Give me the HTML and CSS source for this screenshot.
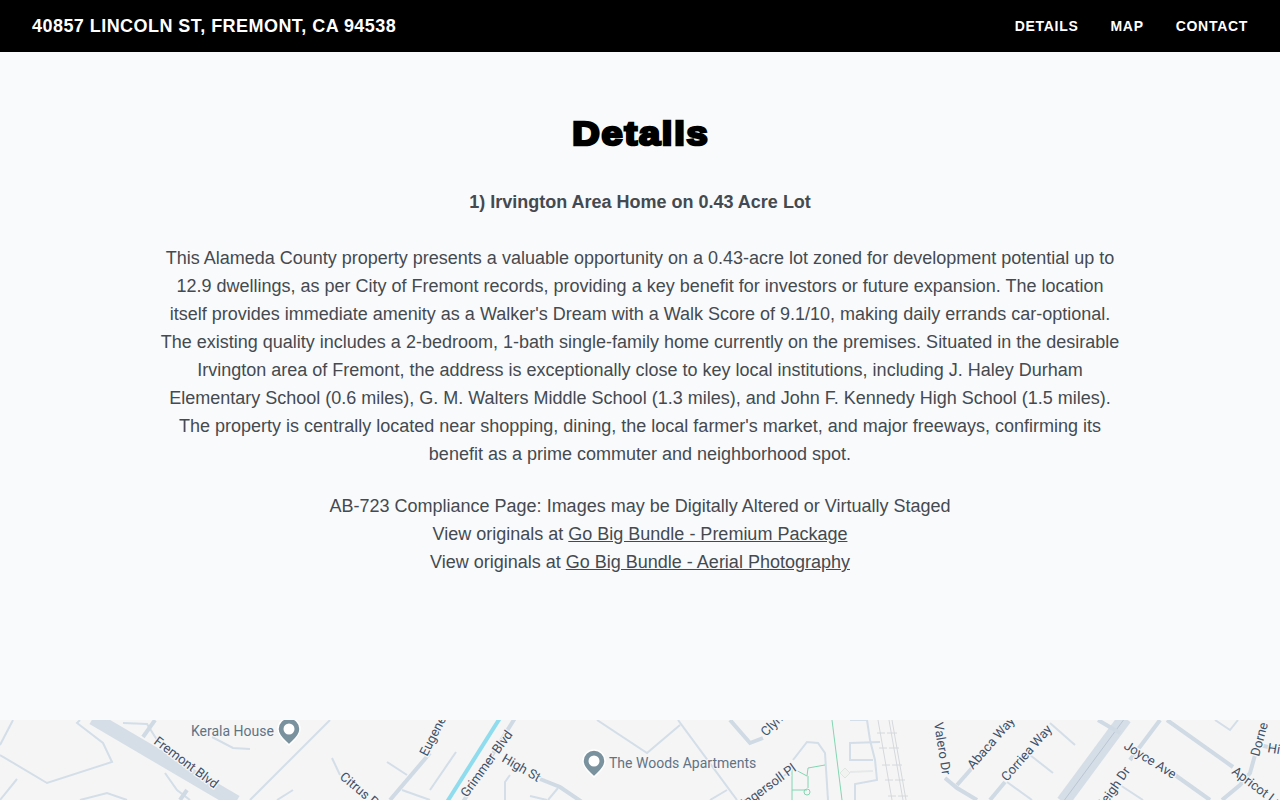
FILE: index.html
```html
<!DOCTYPE html>
<html lang="en">
<head>
    <meta charset="UTF-8">
    <title>40857 Lincoln St, Fremont, CA 94538</title>
    <link rel="stylesheet" href="styles.css">
</head>
<body>
    <header class="topbar">
        <div class="site-title">40857 Lincoln St, Fremont, CA 94538</div>
        <nav class="nav">
            <a href="#details">Details</a>
            <a href="#map">Map</a>
            <a href="#contact">Contact</a>
        </nav>
    </header>

    <section class="details" id="details">
        <h1>Details</h1>
        <p class="lead">1) Irvington Area Home on 0.43 Acre Lot</p>
        <p class="body-text">This Alameda County property presents a valuable opportunity on a 0.43-acre lot zoned for development potential up to 12.9 dwellings, as per City of Fremont records, providing a key benefit for investors or future expansion. The location itself provides immediate amenity as a Walker's Dream with a Walk Score of 9.1/10, making daily errands car-optional. The existing quality includes a 2-bedroom, 1-bath single-family home currently on the premises. Situated in the desirable Irvington area of Fremont, the address is exceptionally close to key local institutions, including J. Haley Durham Elementary School (0.6 miles), G. M. Walters Middle School (1.3 miles), and John F. Kennedy High School (1.5 miles). The property is centrally located near shopping, dining, the local farmer's market, and major freeways, confirming its benefit as a prime commuter and neighborhood spot.</p>
        <p class="compliance">
            AB-723 Compliance Page: Images may be Digitally Altered or Virtually Staged<br>
            View originals at <a href="#">Go Big Bundle - Premium Package</a><br>
            View originals at <a href="#">Go Big Bundle - Aerial Photography</a>
        </p>
    </section>

    <section class="map" id="map">
        <svg class="map-svg" width="1280" height="80" viewBox="0 720 1280 80">
            <!-- wide roads -->
            <g class="road-wide">
                <path d="M93 718L236 802"/>
                <path d="M1125 718L1063 802"/>
            </g>
            <path class="road-centre" d="M1125 718L1063 802"/>

            <!-- streets -->
            <g class="road">
                <path d="M13 720L0 745"/>
                <path d="M0 755L47 783L112 762L103 743L77 723L80 720"/>
                <path d="M17 779L0 800"/>
                <path d="M80 800L107 793L127 800"/>
                <path d="M123 723L147 724L157 740"/>
                <path d="M212 737L233 748L250 749"/>
                <path d="M330 720L250 800"/>
                <path d="M293 790L277 800"/>
                <path d="M332 758L340 775"/>
                <path d="M387 762L407 775"/>
                <path d="M402 790L430 800"/>
                <path d="M165 773L177 790L190 800"/>
                <path d="M597 720L647 753L680 725"/>
                <path d="M678 720L737 800"/>
                <path d="M727 790L710 800"/>
                <path d="M505 800L505 782L510 775"/>
                <path d="M558 788L548 800"/>
                <path d="M530 796L547 800"/>
                <path d="M793 760L807 742L818 743L825 753L828 800"/>
                <path d="M747 800L788 773"/>
                <path d="M850 720L867 720L870 740L875 760L877 780L855 784L855 800"/>
                <path d="M880 742L850 743L850 760L873 760"/>
                <path d="M1050 723L1075 745"/>
                <path d="M1030 755L1053 773"/>
                <path d="M1007 782L1032 800"/>
                <path d="M1215 720L1230 730L1238 720"/>
                <path d="M1120 785L1143 800"/>
                <path d="M456 752L430 790"/>
            </g>
            <g class="road-thick">
                <path d="M155 720L143 737"/>
                <path d="M187 790L180 800"/>
                <path d="M430 753L390 800"/>
                <path d="M515 718L463 802"/>
                <path d="M540 779L560 787L582 802"/>
                <path d="M730 720L750 743L763 738"/>
                <path d="M945 778L957 788L977 800"/>
                <path d="M957 785L972 768"/>
                <path d="M990 800L1005 782"/>
                <path d="M1098 720L1120 733"/>
                <path d="M1160 720L1130 760"/>
                <path d="M1175 775L1210 800"/>
                <path d="M1167 720L1233 767"/>
                <path d="M1255 755L1250 773L1240 785L1222 800"/>
                <path d="M1260 745L1280 750"/>
            </g>
            <path class="transit" d="M500 718L447 802"/>

            <!-- rail -->
            <g class="rail">
                <path d="M878 720L892 800"/>
                <path d="M889 720L903 800"/>
                <path d="M892 720L906 800"/>
                <path d="M877 733H885M887 733H897"/>
                <path d="M879 748H887M889 748H899"/>
                <path d="M882 765H890M892 765H902"/>
                <path d="M885 780H893M895 780H905"/>
                <path d="M888 796H896M898 796H908"/>
            </g>

            <!-- park paths -->
            <g class="park">
                <path d="M832 720L842 800"/>
                <path d="M792 768L807 776L808 768L825 765"/>
                <path d="M792 768L792 800"/>
                <path d="M792 790L807 790"/>
                <path d="M808 776V788"/>
                <circle cx="807" cy="792" r="3"/>
            </g>
            <path class="pale-path" d="M850 772L873 771"/>
            <path class="pale-mark" d="M845 768L850 773L845 778L840 773Z"/>

            <!-- street names -->
            <g class="street-name">
                <text transform="translate(153 743) rotate(37)">Fremont Blvd</text>
                <text transform="translate(339 778) rotate(40)">Citrus P</text>
                <text transform="translate(427 757) rotate(-63)">Eugene</text>
                <text transform="translate(467 798) rotate(-54)">Grimmer Blvd</text>
                <text transform="translate(501 761) rotate(30)">High St</text>
                <text transform="translate(766 737) rotate(-45)">Clyn</text>
                <text transform="translate(745 808) rotate(-36)">Ingersoll Pl</text>
                <text transform="translate(934 723) rotate(81)">Valero Dr</text>
                <text transform="translate(973 770) rotate(-49)">Abaca Way</text>
                <text transform="translate(1007 782) rotate(-49)">Corriea Way</text>
                <text transform="translate(1123 748) rotate(32)">Joyce Ave</text>
                <text transform="translate(1097 819) rotate(-55)">Raleigh Dr</text>
                <text transform="translate(1259 757) rotate(-75)">Dorne</text>
                <text transform="translate(1267 752) rotate(10)">Hi</text>
                <text transform="translate(1231 773) rotate(37)">Apricot Ln</text>
            </g>

            <!-- places -->
            <g class="place-name">
                <text x="191" y="736">Kerala House</text>
                <text x="609" y="768">The Woods Apartments</text>
            </g>
            <g class="pin" transform="translate(289 729)">
                <path class="pin-body" d="M0 16C-3 12 -11 8 -11 0A11 11 0 0 1 11 0C11 8 3 12 0 16Z"/>
                <circle class="pin-dot" r="5.5"/>
            </g>
            <g class="pin" transform="translate(594 761)">
                <path class="pin-body" d="M0 16C-3 12 -11 8 -11 0A11 11 0 0 1 11 0C11 8 3 12 0 16Z"/>
                <circle class="pin-dot" r="5.5"/>
            </g>
        </svg>
    </section>
</body>
</html>
```

FILE: styles.css
```css
html, body {
    margin: 0;
    padding: 0;
}
body {
    font-family: "Liberation Sans", Arial, sans-serif;
    background-color: #f9fafc;
    color: #444a50;
    overflow: hidden;
}
.topbar {
    display: flex;
    justify-content: space-between;
    align-items: center;
    height: 52px;
    padding: 0 32px;
    background-color: #000;
    color: #fff;
}
.site-title {
    font-size: 18px;
    font-weight: bold;
    letter-spacing: 0.45px;
    text-transform: uppercase;
}
.nav {
    display: flex;
    gap: 32px;
}
.nav a {
    color: #fff;
    font-size: 14px;
    font-weight: bold;
    letter-spacing: 0.7px;
    text-decoration: none;
    text-transform: uppercase;
}
.details {
    box-sizing: border-box;
    height: 668px;
    padding-top: 61px;
    text-align: center;
    font-size: 18px;
    line-height: 28px;
}
.details h1 {
    width: 200px;
    margin: 0 auto 33px;
    color: #000;
    font-size: 33px;
    font-weight: bold;
    line-height: 42px;
    letter-spacing: 1.6px;
    text-indent: 1.6px;
    -webkit-text-stroke: 2.6px #000;
    transform: scaleX(1.15);
}
.details p {
    max-width: 960px;
    margin: 0 auto 24px;
}
.details .lead {
    margin-bottom: 28px;
    font-weight: bold;
}
.details a {
    color: inherit;
}
.map {
    height: 80px;
    overflow: hidden;
    background-color: #f5f5f5;
}
.map-svg {
    display: block;
}
.map-svg path {
    fill: none;
}
.road-wide path {
    stroke: #d5dee7;
    stroke-width: 14;
}
.road-centre {
    stroke: #b9c6d3;
    stroke-width: 1;
}
.road path {
    stroke: #d3dee8;
    stroke-width: 2;
}
.road-thick path {
    stroke: #cfdae4;
    stroke-width: 4;
}
.transit {
    stroke: #8fdcee;
    stroke-width: 4;
}
.rail path {
    stroke: #d5d8dc;
    stroke-width: 1;
}
.park path, .park circle {
    fill: none;
    stroke: #82d6b2;
    stroke-width: 1;
}
.map-svg .pale-path {
    stroke: #e6e9ea;
    stroke-width: 2;
}
.map-svg .pale-mark {
    fill: #f0f3f0;
    stroke: #dfe5e0;
}
.street-name text {
    fill: #3f5068;
    stroke: #f5f5f5;
    stroke-width: 2.5px;
    paint-order: stroke;
    font-family: Roboto, sans-serif;
    font-size: 13px;
}
.place-name text {
    fill: #5f7385;
    stroke: #f5f5f5;
    stroke-width: 2px;
    paint-order: stroke;
    font-family: Roboto, sans-serif;
    font-size: 14px;
}
.map-svg .pin-body {
    fill: #7a919e;
    stroke: #fff;
    stroke-width: 1.5;
}
.pin-dot {
    fill: #fff;
}
```
